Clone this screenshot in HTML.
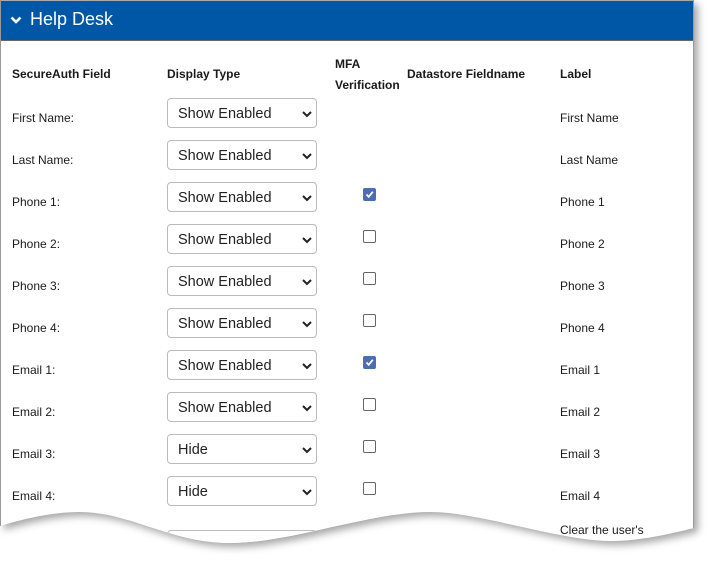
<!DOCTYPE html>
<html><head><meta charset="utf-8"><style>
html,body{margin:0;padding:0;background:#fff;width:709px;height:561px;overflow:hidden}
body{font-family:"Liberation Sans",Arial,sans-serif;color:#1a1a1a}
.wrap{position:absolute;left:0;top:0;width:709px;height:561px;filter:drop-shadow(4px 4px 4px rgba(0,0,0,.35))}
.panel{position:absolute;left:0;top:0;width:694px;height:550px;background:#fff;
clip-path:path('M0 0 H694 V528 C670 534 640 541 610 541 C560 541 480 512 430 512 C370 512 290 543 230 543 C170 543 130 512 80 512 C50 512 20 520 0 526 Z')}
.inner{position:absolute;left:0;top:0;width:694px;height:560px;box-shadow:inset 1px 0 #999,inset -1px 0 #999,inset 0 1px #aaa}
.hdr{position:absolute;left:1px;top:1px;width:692px;height:39px;background:#0057a6;border-bottom:1px solid #666}
.hdr span{position:absolute;left:29px;top:8px;color:#fff;font-size:18px}
.hdr svg{position:absolute;left:9px;top:15px}
.t{position:absolute;font-size:12px}
.h{position:absolute;font-size:12px;font-weight:bold}
.sel{position:absolute;left:167px;width:148px;height:28px;border:1px solid #bbb;border-radius:4px;box-sizing:content-box;background:#fff}
.sel span{position:absolute;left:10px;top:7px;font-size:14.5px;color:#222}
.sel svg{position:absolute;right:4px;top:12px}
.cb{position:absolute;left:363px;width:11px;height:11px;border:1px solid #666;border-radius:2px;background:#fff}
.cb.on{background:#4a6fb0;border-color:#4a6fb0}
.cb svg{position:absolute;left:1px;top:1px}
</style></head><body>
<div class="wrap"><div class="panel"><div class="inner">
<div class="hdr"><svg width="12" height="9" viewBox="0 0 12 9"><path d="M1.5 1.5 L6 6 L10.5 1.5" stroke="#fff" stroke-width="2.6" fill="none"/></svg><span>Help Desk</span></div>
<div class="h" style="left:12px;top:67px">SecureAuth Field</div>
<div class="h" style="left:167px;top:67px">Display Type</div>
<div class="h" style="left:335px;top:54px;line-height:21px">MFA<br>Verification</div>
<div class="h" style="left:407px;top:67px">Datastore Fieldname</div>
<div class="h" style="left:560px;top:67px">Label</div>

<div class="t" style="left:12px;top:111px">First Name:</div><div class="sel" style="top:98px"><span>Show Enabled</span><svg width="10" height="7"><path d="M1 1L5 5L9 1" stroke="#222" stroke-width="2" fill="none"/></svg></div><div class="t" style="left:560px;top:111px">First Name</div>
<div class="t" style="left:12px;top:153px">Last Name:</div><div class="sel" style="top:140px"><span>Show Enabled</span><svg width="10" height="7"><path d="M1 1L5 5L9 1" stroke="#222" stroke-width="2" fill="none"/></svg></div><div class="t" style="left:560px;top:153px">Last Name</div>
<div class="t" style="left:12px;top:195px">Phone 1:</div><div class="sel" style="top:182px"><span>Show Enabled</span><svg width="10" height="7"><path d="M1 1L5 5L9 1" stroke="#222" stroke-width="2" fill="none"/></svg></div><div class="cb on" style="top:188px"><svg width="9" height="9"><path d="M1.5 4.5L3.7 6.8L7.8 1.8" stroke="#fff" stroke-width="1.8" fill="none"/></svg></div><div class="t" style="left:560px;top:195px">Phone 1</div>
<div class="t" style="left:12px;top:237px">Phone 2:</div><div class="sel" style="top:224px"><span>Show Enabled</span><svg width="10" height="7"><path d="M1 1L5 5L9 1" stroke="#222" stroke-width="2" fill="none"/></svg></div><div class="cb" style="top:230px"></div><div class="t" style="left:560px;top:237px">Phone 2</div>
<div class="t" style="left:12px;top:279px">Phone 3:</div><div class="sel" style="top:266px"><span>Show Enabled</span><svg width="10" height="7"><path d="M1 1L5 5L9 1" stroke="#222" stroke-width="2" fill="none"/></svg></div><div class="cb" style="top:272px"></div><div class="t" style="left:560px;top:279px">Phone 3</div>
<div class="t" style="left:12px;top:321px">Phone 4:</div><div class="sel" style="top:308px"><span>Show Enabled</span><svg width="10" height="7"><path d="M1 1L5 5L9 1" stroke="#222" stroke-width="2" fill="none"/></svg></div><div class="cb" style="top:314px"></div><div class="t" style="left:560px;top:321px">Phone 4</div>
<div class="t" style="left:12px;top:363px">Email 1:</div><div class="sel" style="top:350px"><span>Show Enabled</span><svg width="10" height="7"><path d="M1 1L5 5L9 1" stroke="#222" stroke-width="2" fill="none"/></svg></div><div class="cb on" style="top:356px"><svg width="9" height="9"><path d="M1.5 4.5L3.7 6.8L7.8 1.8" stroke="#fff" stroke-width="1.8" fill="none"/></svg></div><div class="t" style="left:560px;top:363px">Email 1</div>
<div class="t" style="left:12px;top:405px">Email 2:</div><div class="sel" style="top:392px"><span>Show Enabled</span><svg width="10" height="7"><path d="M1 1L5 5L9 1" stroke="#222" stroke-width="2" fill="none"/></svg></div><div class="cb" style="top:398px"></div><div class="t" style="left:560px;top:405px">Email 2</div>
<div class="t" style="left:12px;top:447px">Email 3:</div><div class="sel" style="top:434px"><span>Hide</span><svg width="10" height="7"><path d="M1 1L5 5L9 1" stroke="#222" stroke-width="2" fill="none"/></svg></div><div class="cb" style="top:440px"></div><div class="t" style="left:560px;top:447px">Email 3</div>
<div class="t" style="left:12px;top:489px">Email 4:</div><div class="sel" style="top:476px"><span>Hide</span><svg width="10" height="7"><path d="M1 1L5 5L9 1" stroke="#222" stroke-width="2" fill="none"/></svg></div><div class="cb" style="top:482px"></div><div class="t" style="left:560px;top:489px">Email 4</div>
<div class="sel" style="top:530px"></div>
<div class="t" style="left:560px;top:523px">Clear the user's</div>
</div></div></div>
</body></html>
